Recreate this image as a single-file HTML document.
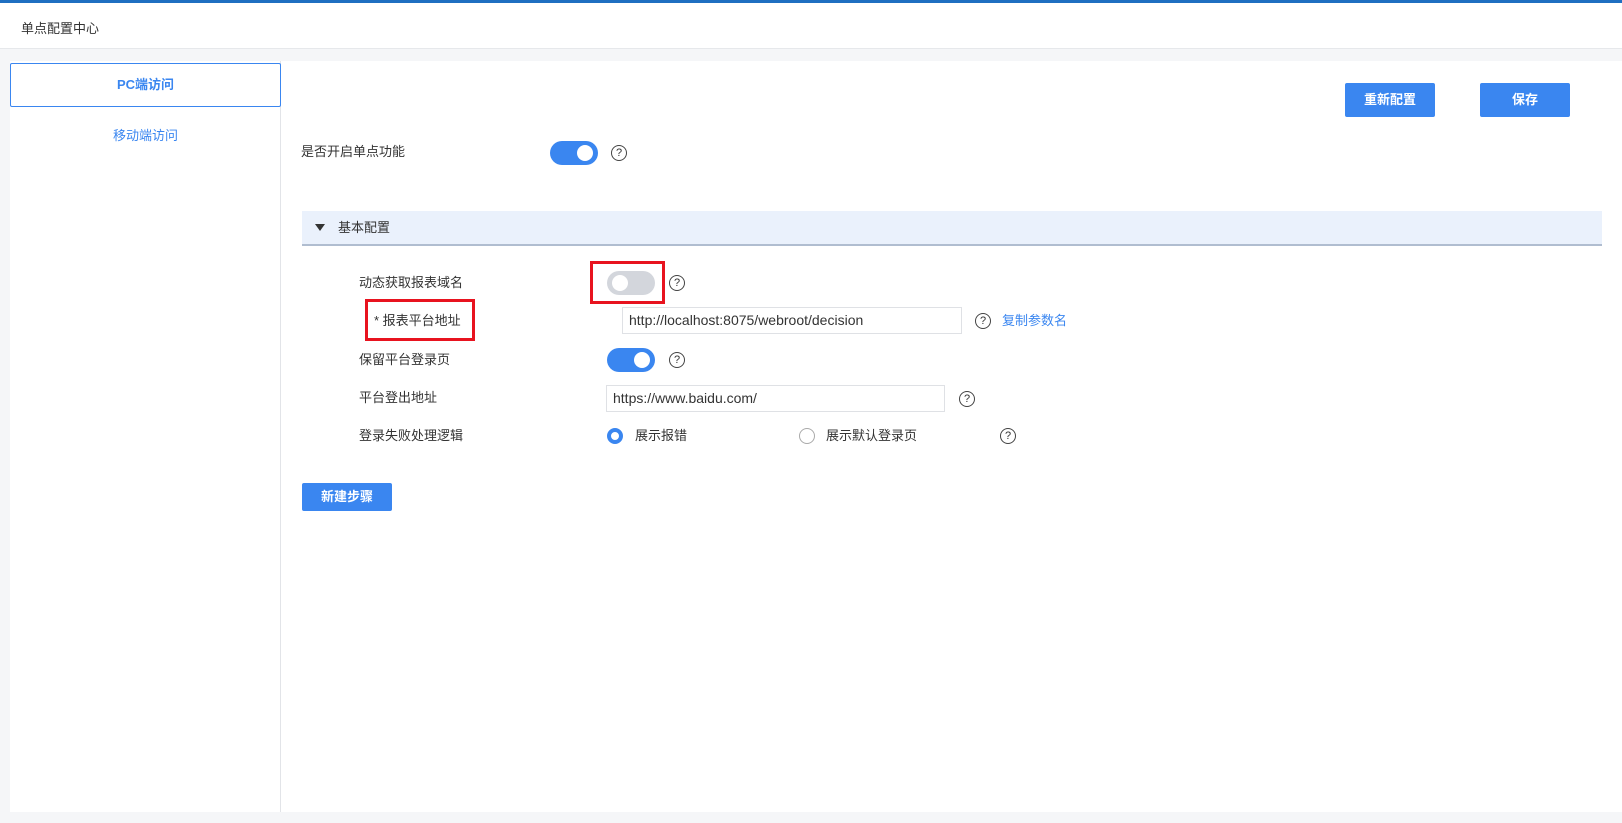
<!DOCTYPE html>
<html><head><meta charset="utf-8"><style>
*{margin:0;padding:0;box-sizing:border-box}
body{width:1622px;height:823px;background:#f5f6f8;font-family:"Liberation Sans","Noto Sans CJK SC",sans-serif;font-size:13px;color:#333;position:relative;overflow:hidden}
.a{position:absolute}
.top{left:0;top:0;width:1622px;height:3px;background:#1f6fc1}
.hdr{left:0;top:3px;width:1622px;height:46px;background:#fff;border-bottom:1px solid #e6e8eb}
.side{left:10px;top:61px;width:271px;height:751px;background:#fff;border-right:1px solid #e2e4e8}
.main{left:281px;top:61px;width:1341px;height:751px;background:#fff}
.btn{background:#3a86f0;color:#fff;border-radius:2px;text-align:center;font-weight:bold;font-size:13px}
.tg{width:48px;height:24px;border-radius:12px;background:#3a86f0}
.tg::after{content:"";position:absolute;top:4px;right:5px;width:16px;height:16px;border-radius:50%;background:#fff}
.tg.off{background:#d3d6dc}
.tg.off::after{left:5px;right:auto}
.q{width:16px;height:16px;border:1.3px solid #444;border-radius:50%;font-size:11px;line-height:14px;text-align:center;color:#333}
.inp{border:1px solid #dfe1e5;background:#fff;font-size:14px;padding-left:6px;color:#333}
.red{border:3px solid #e8131f}
.lb{font-size:13px;line-height:16px}
</style></head><body>
<div class="a top"></div>
<div class="a hdr"><span class="a" style="left:21px;top:15px;font-size:13px">单点配置中心</span></div>
<div class="a side">
 <div class="a" style="left:0;top:2px;width:271px;height:44px;border:1px solid #3a86f0;border-radius:2px;color:#3a86f0;font-weight:bold;text-align:center;line-height:42px">PC端访问</div>
 <div class="a" style="left:0;top:66px;width:271px;text-align:center;color:#3a86f0;line-height:18px">移动端访问</div>
</div>
<div class="a main"></div>
<div class="a btn" style="left:1345px;top:83px;width:90px;height:34px;line-height:34px">重新配置</div>
<div class="a btn" style="left:1480px;top:83px;width:90px;height:34px;line-height:34px">保存</div>

<div class="a lb" style="left:301px;top:144px">是否开启单点功能</div>
<div class="a tg" style="left:550px;top:141px"></div>
<div class="a q" style="left:611px;top:145px">?</div>

<div class="a" style="left:302px;top:211px;width:1300px;height:35px;background:#eaf1fc;border-bottom:2px solid #b0bdd0"></div>
<div class="a" style="left:315px;top:224px;width:0;height:0;border-left:5px solid transparent;border-right:5px solid transparent;border-top:7px solid #333"></div>
<div class="a lb" style="left:338px;top:220px">基本配置</div>

<div class="a lb" style="left:359px;top:275px">动态获取报表域名</div>
<div class="a red" style="left:590px;top:261px;width:75px;height:43px"></div>
<div class="a tg off" style="left:607px;top:271px"></div>
<div class="a q" style="left:669px;top:275px">?</div>

<div class="a red" style="left:365px;top:299px;width:110px;height:42px"></div>
<div class="a lb" style="left:374px;top:313px">* 报表平台地址</div>
<div class="a inp" style="left:622px;top:307px;width:340px;height:27px;line-height:25px">http://localhost:8075/webroot/decision</div>
<div class="a q" style="left:975px;top:313px">?</div>
<div class="a lb" style="left:1002px;top:313px;color:#3a86f0">复制参数名</div>

<div class="a lb" style="left:359px;top:352px">保留平台登录页</div>
<div class="a tg" style="left:607px;top:348px"></div>
<div class="a q" style="left:669px;top:352px">?</div>

<div class="a lb" style="left:359px;top:390px">平台登出地址</div>
<div class="a inp" style="left:606px;top:385px;width:339px;height:27px;line-height:25px">https://www.baidu.com/</div>
<div class="a q" style="left:959px;top:391px">?</div>

<div class="a lb" style="left:359px;top:428px">登录失败处理逻辑</div>
<div class="a" style="left:607px;top:428px;width:16px;height:16px;border-radius:50%;border:4.5px solid #3a86f0;background:#fff"></div>
<div class="a lb" style="left:635px;top:428px">展示报错</div>
<div class="a" style="left:799px;top:428px;width:16px;height:16px;border-radius:50%;border:1px solid #aaa;background:#fff"></div>
<div class="a lb" style="left:826px;top:428px">展示默认登录页</div>
<div class="a q" style="left:1000px;top:428px">?</div>

<div class="a btn" style="left:302px;top:483px;width:90px;height:28px;line-height:28px">新建步骤</div>
</body></html>
